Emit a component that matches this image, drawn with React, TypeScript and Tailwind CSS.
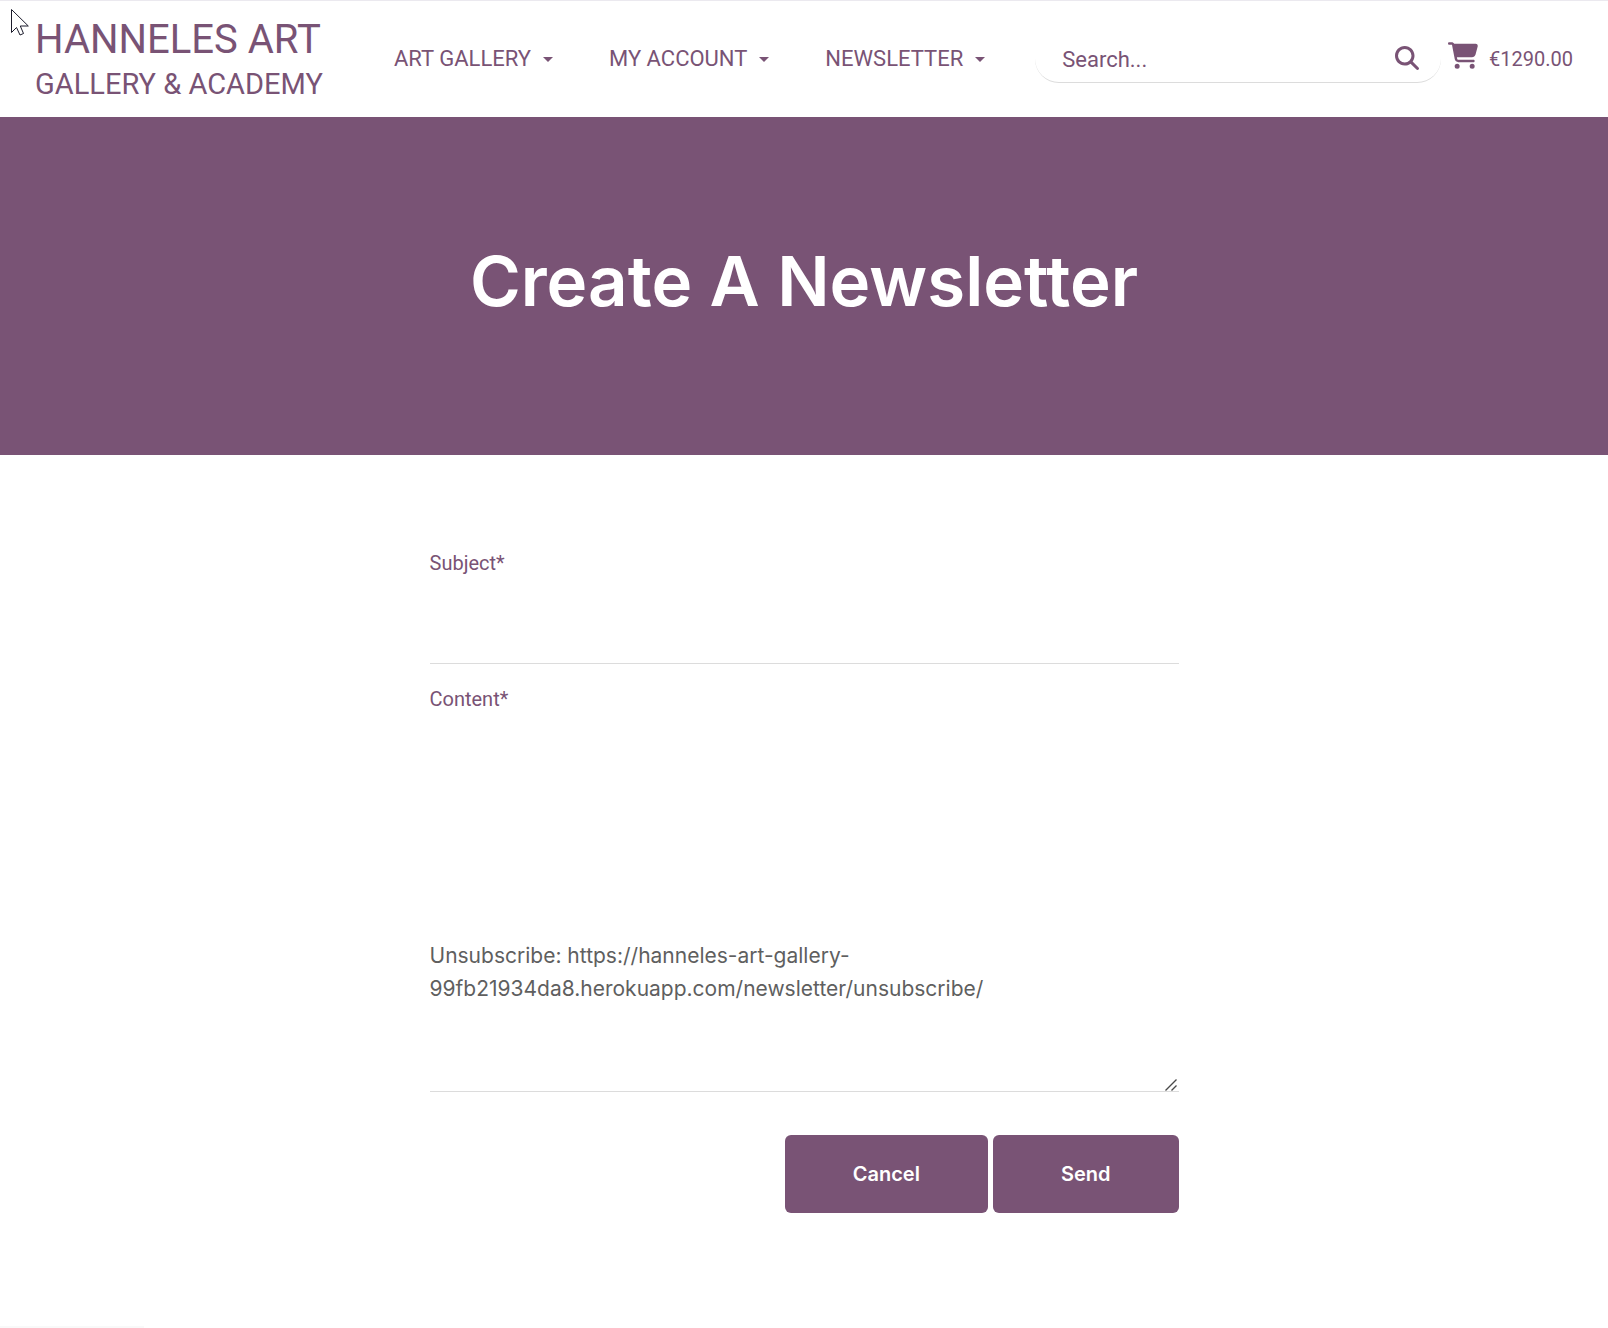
import { FaCartShopping, FaMagnifyingGlass } from "react-icons/fa6";

const menus = ["ART GALLERY", "MY ACCOUNT", "NEWSLETTER"];

const initialContent =
  "\n\n\n\n\n\nUnsubscribe: https://hanneles-art-gallery-99fb21934da8.herokuapp.com/newsletter/unsubscribe/";

function Pointer() {
  return (
    <svg
      className="pointer-events-none absolute left-[11px] top-[9px]"
      width="18"
      height="28"
      viewBox="0 0 18 28"
      fill="#fff"
      stroke="#1b1b2b"
      strokeWidth="1"
      aria-hidden="true"
    >
      <path d="M.5.5v23l5-5 3.500 7.500 3.500-1.500-3.200-7.500h8z" />
    </svg>
  );
}

function ResizeGrip() {
  return (
    <svg
      className="pointer-events-none absolute right-[2px] bottom-px"
      width="12"
      height="12"
      viewBox="0 0 12 12"
      stroke="#4a4a4a"
      strokeWidth="1.4"
      aria-hidden="true"
    >
      <path d="M.5 11.500l11-11M6.500 11.500l5-5" />
    </svg>
  );
}

function Header() {
  return (
    <header className="flex items-center border-t border-[#ebe9ef] bg-white px-[35px] py-3 text-[#795375]">
      <a href="#home" className="flex h-[92px] w-[288px] shrink-0 flex-col pt-[5px]">
        <span className="text-[40px] leading-[44px] whitespace-nowrap">HANNELES ART</span>
        <span className="text-[29px] leading-[44px] whitespace-nowrap">GALLERY &amp; ACADEMY</span>
      </a>
      <nav className="ml-[71px] flex shrink-0 gap-14">
        {menus.map((name) => (
          <button key={name} type="button" className="flex items-center gap-3 text-[22px] leading-8">
            {name}
            <span className="border-x-5 border-t-5 border-x-transparent border-t-[#795375]" />
          </button>
        ))}
      </nav>
      <form
        role="search"
        className="ml-[50px] flex h-12 min-w-0 flex-1 items-center rounded-3xl border-b border-[#dcdcdc] pr-[22px] pl-[27px]"
      >
        <input
          type="search"
          aria-label="Search"
          placeholder="Search..."
          className="min-w-0 flex-1 bg-transparent pt-0.5 text-[22px] leading-8 outline-none placeholder:text-[#795375]"
        />
        <button type="button" aria-label="Search" className="mb-0.5 shrink-0">
          <FaMagnifyingGlass size={24} />
        </button>
      </form>
      <a href="#cart" className="ml-[7px] flex shrink-0 items-center gap-[11px] text-[20px] leading-7">
        <FaCartShopping size={30} className="mb-2 h-[27px]" />
        €1290.00
      </a>
    </header>
  );
}

export default function App() {
  return (
    <div className="relative min-h-screen bg-white font-['Roboto',sans-serif]">
      <Header />
      <section className="bg-[#795375] pt-[121px] pb-[131px] text-center text-white">
        <h1 className="font-['Inter',sans-serif] text-[69px] leading-[86px] font-semibold">
          Create A Newsletter
        </h1>
      </section>
      <main className="mx-auto max-w-[749px] pt-[92px]">
        <form>
          <label htmlFor="subject" className="block text-[20px] leading-8 text-[#795375]">
            Subject*
          </label>
          <input
            id="subject"
            type="text"
            className="block h-[85px] w-full border-b border-[#dcdcdc] bg-transparent font-['Inter',sans-serif] text-[21px] text-[#5f5f5f] outline-none"
          />
          <label htmlFor="content" className="mt-[19px] block text-[20px] leading-8 text-[#795375]">
            Content*
          </label>
          <div className="relative">
            <textarea
              id="content"
              defaultValue={initialContent}
              className="block h-[377px] w-full resize-y overflow-hidden border-b border-[#dcdcdc] bg-transparent pt-[26px] font-['Inter',sans-serif] text-[21px] leading-[33px] text-[#5f5f5f] outline-none [&::-webkit-resizer]:hidden"
            />
            <ResizeGrip />
          </div>
          <div className="mt-[43px] flex justify-end gap-[5px] font-['Inter',sans-serif] text-[20px] leading-[30px] font-semibold text-white">
            <button type="button" className="rounded-md bg-[#795375] px-[68px] py-6">
              Cancel
            </button>
            <button type="submit" className="rounded-md bg-[#795375] px-[68px] py-6">
              Send
            </button>
          </div>
        </form>
      </main>
      <Pointer />
      <div className="fixed bottom-0 left-0 h-[2px] w-36 bg-[#f9f9f9]" />
    </div>
  );
}
